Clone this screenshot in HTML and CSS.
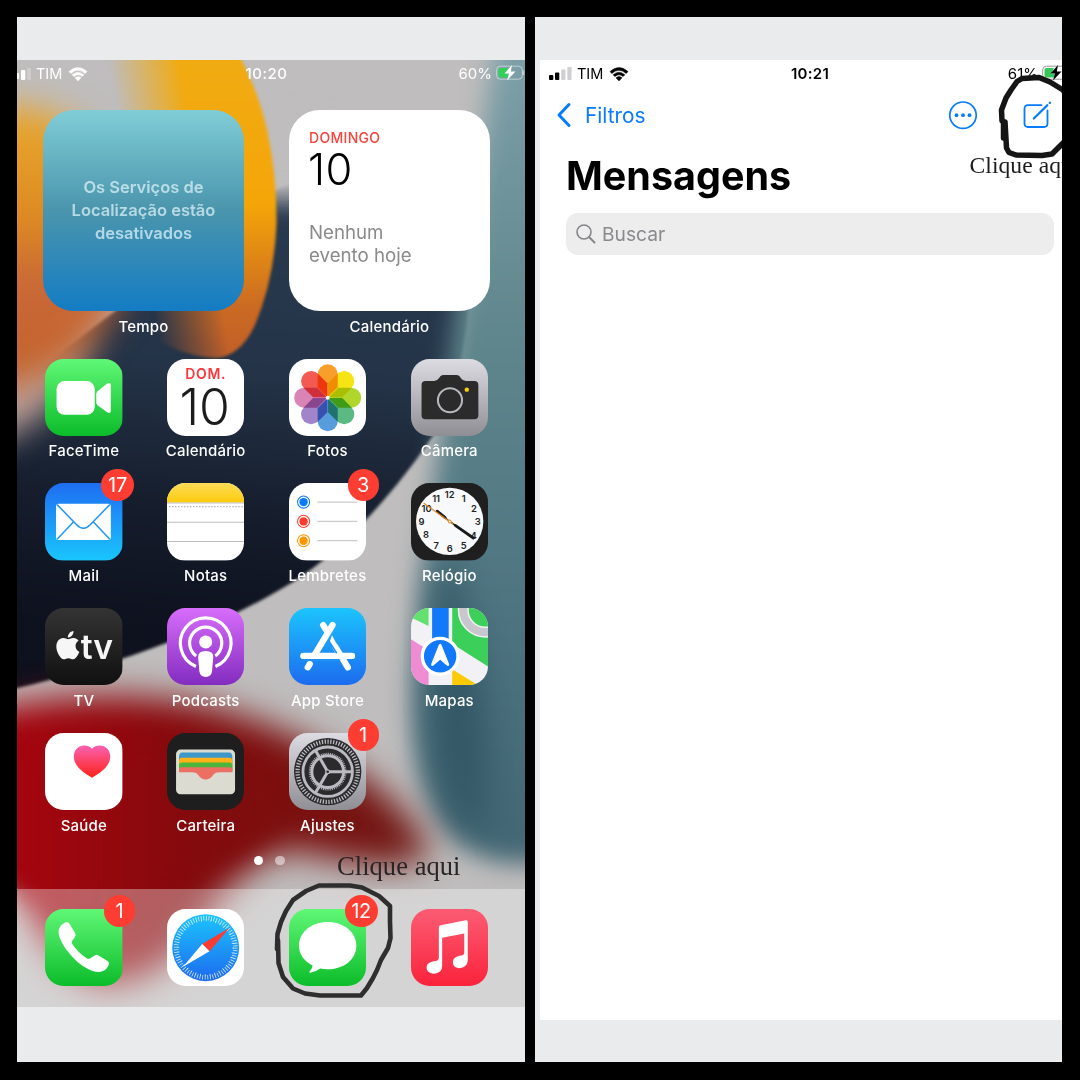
FILE: index.html
```html
<!DOCTYPE html>
<html lang="pt-BR">
<head>
<meta charset="utf-8">
<title>Mensagens</title>
<link rel="stylesheet" href="styles.css">
</head>
<body>
<svg class="defs" width="0" height="0" aria-hidden="true">
  <defs>
    <linearGradient id="green" x2="0" y2="1"><stop stop-color="#60f777"/><stop offset="1" stop-color="#0bbc29"/></linearGradient>
    <linearGradient id="blue" x2="0" y2="1"><stop stop-color="#1cc4fd"/><stop offset="1" stop-color="#1c6bee"/></linearGradient>
    <linearGradient id="mailblue" x2="0" y2="1"><stop stop-color="#1e6df2"/><stop offset="1" stop-color="#1ac6fd"/></linearGradient>
    <linearGradient id="silver" x2="0" y2="1"><stop stop-color="#dddce2"/><stop offset="1" stop-color="#8f8e94"/></linearGradient>
    <linearGradient id="purple" x2="0" y2="1"><stop stop-color="#d86dfb"/><stop offset="1" stop-color="#822cbf"/></linearGradient>
    <linearGradient id="coal" x2="0" y2="1"><stop stop-color="#343434"/><stop offset="1" stop-color="#101010"/></linearGradient>
    <linearGradient id="pink" x2="0" y2="1"><stop stop-color="#fb5c74"/><stop offset="1" stop-color="#fa233b"/></linearGradient>
    <linearGradient id="heart" x2="0" y2="1"><stop stop-color="#fb61b2"/><stop offset="1" stop-color="#fd2216"/></linearGradient>
    <linearGradient id="yellow" x2="0" y2="1"><stop stop-color="#fedc58"/><stop offset="1" stop-color="#fbcb0b"/></linearGradient>
    <symbol id="wifi" viewBox="0 0 20 15">
      <path d="M1 5.6Q10-2.4 19 5.6L17.2 7.5Q10 1.2 2.8 7.5ZM4.1 8.8Q10 3.6 15.9 8.8L14.1 10.6Q10 7.1 5.9 10.6ZM10 14.9L7 11.8Q10 9.4 13 11.8Z" fill="currentColor" stroke="currentColor" stroke-width=".5"/>
    </symbol>
    <path id="petal" d="M0-.5L-10-10.500V-23.300a10 10 0 0 1 20 0V-10.500Z"/>
  </defs>
</svg>
<main class="board">
  <section class="panel panel-home">
    <div class="home">
      <svg class="wallpaper" viewBox="17 60 508 947" preserveAspectRatio="none" aria-hidden="true" color-interpolation-filters="sRGB">
        <defs>
          <filter id="b2" x="-20%" y="-20%" width="140%" height="140%"><feGaussianBlur stdDeviation="1.500"/></filter>
          <filter id="b12" x="-50%" y="-30%" width="200%" height="160%"><feGaussianBlur stdDeviation="12"/></filter>
          <filter id="b18" x="-50%" y="-50%" width="200%" height="200%"><feGaussianBlur stdDeviation="17"/></filter>
          <linearGradient id="navy" gradientUnits="userSpaceOnUse" x1="300" y1="200" x2="260" y2="640"><stop stop-color="#283a50"/><stop offset=".4" stop-color="#243347"/><stop offset=".75" stop-color="#141b2a"/><stop offset="1" stop-color="#0e111e"/></linearGradient>
          <linearGradient id="teal" gradientUnits="userSpaceOnUse" x1="0" y1="60" x2="0" y2="870"><stop stop-color="#7d9fa8"/><stop offset=".35" stop-color="#5f868c"/><stop offset=".7" stop-color="#4d7380"/><stop offset="1" stop-color="#426673"/></linearGradient>
          <linearGradient id="amber" gradientUnits="userSpaceOnUse" x1="0" y1="60" x2="0" y2="350"><stop stop-color="#f0ab12"/><stop offset=".5" stop-color="#f4a508"/><stop offset=".85" stop-color="#cb6a22"/><stop offset="1" stop-color="#c36028"/></linearGradient>
          <linearGradient id="rust" gradientUnits="userSpaceOnUse" x1="0" y1="120" x2="0" y2="370"><stop stop-color="#e8a52c"/><stop offset=".4" stop-color="#dd8a22"/><stop offset=".65" stop-color="#c96838"/><stop offset="1" stop-color="#c4642c"/></linearGradient>
          <linearGradient id="crimson" gradientUnits="userSpaceOnUse" x1="17" y1="0" x2="430" y2="0"><stop stop-color="#a5050e"/><stop offset=".4" stop-color="#850a0d"/><stop offset="1" stop-color="#6e1712"/></linearGradient>
          <linearGradient id="fade" gradientUnits="userSpaceOnUse" x1="108" y1="60" x2="176" y2="48"><stop offset="0" stop-color="#fff" stop-opacity="0"/><stop offset=".5" stop-color="#fff" stop-opacity=".5"/><stop offset="1" stop-color="#fff"/></linearGradient>
          <mask id="ellipsefade" maskUnits="userSpaceOnUse" x="90" y="0" width="210" height="400"><rect x="90" y="0" width="210" height="400" fill="url(#fade)"/></mask>
        </defs>
        <rect x="17" y="60" width="508" height="947" fill="#bfbdbd"/>
        <path d="M275 190Q370 150 470 230Q475 350 440 425C400 487 350 542 305 574C240 618 130 664 0 692V400L90 330Z" fill="url(#navy)" filter="url(#b2)"/>
        <path d="M230 130Q370 100 480 150V200H230Z" fill="#bfbdbd" filter="url(#b12)"/>
        <path d="M496 30Q475 200 452 340C440 450 420 560 412 680Q405 890 560 860V30Z" fill="url(#teal)" filter="url(#b12)"/>
        <path d="M440 560Q410 800 480 840Q500 700 450 560Z" fill="#2f5360" opacity=".85" filter="url(#b18)"/>
        <path d="M-40 350L90 330Q80 400 10 435L-40 455Z" fill="#bfa39b" filter="url(#b18)"/>
        <path d="M-20 110Q60 90 120 170V300Q85 365 30 380L-20 400Z" fill="url(#rust)" filter="url(#b18)"/>
        <path d="M90 20H218Q255 75 267 130Q277 175 276.500 225Q274 280 255 325Q240 357 215 358Q170 356 120 315L90 250Z" fill="url(#amber)" filter="url(#b2)" mask="url(#ellipsefade)"/>
        <path d="M-30 715C60 690 160 688 240 715C320 740 400 790 430 850Q420 880 290 850Q240 865 205 920Q170 978 110 985Q60 985 17 890L-40 850Z" fill="url(#crimson)" filter="url(#b18)"/>
        <path d="M-30 755Q160 700 300 790Q270 850 200 865Q120 945 70 920L-30 860Z" fill="url(#crimson)" filter="url(#b12)"/>
      </svg>
      <header class="status status-light">
        <div class="carrier">
          <svg width="21" height="14" viewBox="0 0 21 14"><rect x="-2" y="7" width="4" height="6" rx="1" fill="#fff"/><rect x="4" y="4" width="4.3" height="10" rx="1" fill="#fff"/><rect x="10" y="2" width="4" height="12" rx="1" fill="#fff" opacity=".25"/></svg>
          <span>TIM</span>
          <svg class="wifi" width="20" height="15"><use href="#wifi"/></svg>
        </div>
        <time class="clock">10:20</time>
        <div class="battery"><span>60%</span>
          <svg width="29" height="16" viewBox="0 0 29 16"><rect x=".7" y="1.2" width="25.6" height="13" rx="3.6" fill="none" stroke="#fff" stroke-opacity=".5"/><path d="M4.5 3H12L9 9H13L12 12.500H4.500Q2.500 12.500 2.500 10.500V5Q2.500 3 4.500 3Z" fill="#31d158"/><path d="M16 0L8.500 8.500H13L11 15.500L19.500 6.500H14.800Z" fill="#fff"/><path d="M27.500 5.500V10" stroke="#fff" stroke-opacity=".5" stroke-width="1.500"/></svg>
        </div>
      </header>
      <div class="widgets">
        <figure class="widget">
          <div class="tile tile-weather">Os Serviços de<br>Localização estão<br>desativados</div>
          <figcaption>Tempo</figcaption>
        </figure>
        <figure class="widget">
          <div class="tile tile-calendar"><b>DOMINGO</b><strong>10</strong><p>Nenhum<br>evento hoje</p></div>
          <figcaption>Calendário</figcaption>
        </figure>
      </div>
      <div class="apps">
        <div class="app"><div class="icon"><svg viewBox="0 0 77 77"><rect width="77" height="77" fill="url(#green)"/><rect x="11.500" y="22" width="38" height="33.500" rx="8" fill="#fff"/><path d="M51 35Q51 33.500 52.300 32L61.500 24.700Q65.500 22.500 65.500 26V51.500Q65.500 55 61.500 52.800L52.300 46Q51 44.500 51 43Z" fill="#fff"/></svg></div><span>FaceTime</span></div>
        <div class="app"><div class="icon icon-cal"><b>DOM.</b><strong>10</strong></div><span>Calendário</span></div>
        <div class="app"><div class="icon"><svg viewBox="0 0 77 77"><rect width="77" height="77" fill="#fff"/><g class="petals" transform="translate(38.500 38.500)"><use href="#petal" fill="#f89f2a"/><use href="#petal" fill="#f6e414" transform="rotate(45)"/><use href="#petal" fill="#b0d62c" transform="rotate(90)"/><use href="#petal" fill="#5cb984" transform="rotate(135)"/><use href="#petal" fill="#579ddb" transform="rotate(180)"/><use href="#petal" fill="#a284cb" transform="rotate(225)"/><use href="#petal" fill="#d984b4" transform="rotate(270)"/><use href="#petal" fill="#f35a52" transform="rotate(315)"/></g><circle cx="38.500" cy="38.500" r="2" fill="#fff"/></svg></div><span>Fotos</span></div>
        <div class="app"><div class="icon"><svg viewBox="0 0 77 77"><rect width="77" height="77" fill="url(#silver)"/><path d="M14.500 22H23Q26 22 28 19L29 17.500Q30 16 32 16H45.500Q47.500 16 48.500 17.500L49.500 19Q51.500 22 54.500 22H63Q67 22 67 26V56Q67 60 63 60H14.500Q10.500 60 10.500 56V26Q10.500 22 14.500 22Z" fill="#2b2b2b"/><circle cx="38.800" cy="41" r="12" fill="none" stroke="#b9b8be" stroke-width="2"/><circle cx="55.500" cy="30.500" r="2.200" fill="#fccf0b"/></svg></div><span>Câmera</span></div>
        <div class="app"><div class="icon"><svg viewBox="0 0 77 77"><rect width="77" height="77" fill="url(#mailblue)"/><rect x="11" y="20.700" width="54.500" height="36" rx="2.500" fill="#fff"/><g fill="none" stroke="#1f96f8" stroke-width="1.500"><path d="M12 21.500L31.500 41.500Q38.300 48.500 45 41.500L64.500 21.500M12 56L28.500 38.500M64.500 56L48 38.500"/></g></svg></div><i class="badge wide">17</i><span>Mail</span></div>
        <div class="app"><div class="icon"><svg viewBox="0 0 77 77"><rect width="77" height="77" fill="#fff"/><rect width="77" height="19.500" fill="url(#yellow)"/><path d="M0 20H77M0 39H77M0 58.200H77" stroke="#bdbdbf"/><path d="M2 23.500H77" stroke="#a9a9a9" stroke-width="1.300" stroke-dasharray="1.300 1.700"/></svg></div><span>Notas</span></div>
        <div class="app"><div class="icon"><svg viewBox="0 0 77 77"><rect width="77" height="77" fill="#fff"/><g fill="none"><circle cx="14.500" cy="19" r="6" stroke="#0a7aff"/><circle cx="14.500" cy="38.200" r="6" stroke="#fc3b30"/><circle cx="14.500" cy="57.400" r="6" stroke="#fd9500"/><path d="M28 19H68M28 38.200H68M28 57.400H68" stroke="#cbcbcd" stroke-width="1.300"/></g><circle cx="14.500" cy="19" r="4.200" fill="#0a7aff"/><circle cx="14.500" cy="38.200" r="4.200" fill="#fc3b30"/><circle cx="14.500" cy="57.400" r="4.200" fill="#fd9500"/></svg></div><i class="badge">3</i><span>Lembretes</span></div>
        <div class="app"><div class="icon"><svg viewBox="0 0 77 77"><rect width="77" height="77" fill="#1f1f1f"/><circle cx="38.500" cy="38.200" r="33.500" fill="#f7f9fb"/><g class="numerals"><text x="38.500" y="14.800">12</text><text x="52.500" y="18.500">1</text><text x="62.500" y="28.800">2</text><text x="66.300" y="41.700">3</text><text x="62.300" y="55.500">4</text><text x="52.300" y="65.200">5</text><text x="38.500" y="68.800">6</text><text x="25" y="65.200">7</text><text x="14.800" y="55.200">8</text><text x="10.500" y="41.700">9</text><text x="15.500" y="28.800">10</text><text x="25" y="18.500">11</text></g><path d="M25.500 27.500L38.500 38.200L62.500 55" fill="none" stroke="#1b1b1b" stroke-width="1.300"/><path d="M26 28L34 34.500M44 42.200L62 54.700" stroke="#1b1b1b" stroke-width="2.800" stroke-linecap="round"/><path d="M12.500 19.800L42 41" stroke="#ee8a24" stroke-width="1.200"/><circle cx="38.500" cy="38.300" r="1.500" fill="#f7f9fb" stroke="#ee8a24"/></svg></div><span>Relógio</span></div>
        <div class="app"><div class="icon"><svg viewBox="0 0 77 77"><rect width="77" height="77" fill="url(#coal)"/><path transform="translate(8.700 23) scale(1.170)" fill="#f6f6f6" d="M12.152 6.896c-.948 0-2.415-1.078-3.960-1.040-2.040.027-3.910 1.183-4.961 3.014-2.117 3.675-.546 9.103 1.519 12.090 1.013 1.454 2.208 3.090 3.792 3.039 1.520-.065 2.090-.987 3.935-.987 1.831 0 2.350.987 3.960.948 1.637-.026 2.676-1.480 3.676-2.948 1.156-1.688 1.636-3.325 1.662-3.415-.039-.013-3.182-1.221-3.220-4.857-.026-3.040 2.480-4.494 2.597-4.559-1.429-2.090-3.623-2.324-4.390-2.376-2-.156-3.675 1.090-4.610 1.090zM15.530 3.830c.843-1.012 1.400-2.427 1.245-3.830-1.207.052-2.662.805-3.532 1.818-.780.896-1.454 2.338-1.273 3.714 1.338.104 2.715-.688 3.559-1.701"/><text class="tv" x="35.500" y="50.500">tv</text></svg></div><span>TV</span></div>
        <div class="app"><div class="icon"><svg viewBox="0 0 77 77"><rect width="77" height="77" fill="url(#purple)"/><g fill="none" stroke="#fff" stroke-width="3.200"><path d="M28.800 58.200A25.200 25.200 0 1 1 48.200 58.200"/><path d="M29 47.800A16 16 0 1 1 48 47.800"/></g><circle cx="38.500" cy="33.800" r="6.500" fill="#fff"/><path d="M38.500 42.800Q46.200 42.800 46 49L44.800 63Q44 68.700 38.500 68.700T32.200 63L31 49Q30.800 42.800 38.500 42.800Z" fill="#fff"/></svg></div><span>Podcasts</span></div>
        <div class="app"><div class="icon"><svg viewBox="0 0 77 77"><rect width="77" height="77" fill="url(#blue)"/><g fill="none" stroke="#fff" stroke-width="6.300" stroke-linecap="round"><path d="M14.300 47.700H62.700M34 17L38 23.500M43.300 17L25 47.500M20.600 55.800L18.700 59"/><path d="M46 38.500L58.500 59"/></g><path d="M40.500 33.500L42.800 27L50 40.500L45 42Z" fill="#fff"/><path d="M39.500 32.500L47.500 45M14 51.900H51" stroke="#1f93f7" stroke-width="1.500"/></svg></div><span>App Store</span></div>
        <div class="app"><div class="icon"><svg viewBox="0 0 77 77"><rect width="77" height="77" fill="#f2f1f6"/><path d="M0 0H17.500V18L0 9.500Z" fill="#62e16f"/><path d="M41 0H77V58.500L41 35.500Z" fill="#3cd05a"/><path d="M21 0H37.500V40H21Z" fill="#1279fb"/><path d="M0 31L17.500 42V77H0Z" fill="#ef8bd2"/><path d="M41 61L67 77H41Z" fill="#fccb05"/><circle cx="74" cy="2" r="22" fill="none" stroke="#f2f1f6" stroke-width="11"/><circle cx="74" cy="2" r="22" fill="none" stroke="#c8c7cd" stroke-width="8"/><circle cx="29" cy="48" r="17.800" fill="#1279fb" stroke="#fff" stroke-width="3.300"/><path d="M29 35.500Q30 35.500 30.500 37L38 56Q38 58.500 36 57.500L29 51.500L22 57.500Q20 58.500 20 56L27.500 37Q28 35.500 29 35.500Z" fill="#fff"/></svg></div><span>Mapas</span></div>
        <div class="app"><div class="icon"><svg viewBox="0 0 77 77"><rect width="77" height="77" fill="#fff"/><path d="M46.800 44.600C43 42 28.700 35 28.700 23.500C28.700 12 41.500 9.500 46.800 15.700C52 9.500 64.900 12 64.900 23.500C64.900 35 50.500 42 46.800 44.600Z" fill="url(#heart)"/></svg></div><span>Saúde</span></div>
        <div class="app"><div class="icon"><svg viewBox="0 0 77 77"><rect width="77" height="77" fill="#1e1e1e"/><rect x="9" y="16.500" width="58.700" height="44.500" rx="4.500" fill="#dcdbd1"/><path d="M12 24Q12 19.500 15 19.500H62Q65 19.500 65 24V38H12Z" fill="#3d98c9"/><path d="M12 28Q12 24.700 15 24.700H62Q65 24.700 65 28V38H12Z" fill="#fbb117"/><path d="M12 32Q12 29.300 15 29.300H62Q65 29.300 65 32V38H12Z" fill="#4cb53b"/><path d="M12 36Q12 34 15 34H62Q65 34 65 36V39H52Q48 39 46.500 41Q43 46.300 38.500 46.300T30.500 41Q29 39 25 39H12Z" fill="#ec6f64"/></svg></div><span>Carteira</span></div>
        <div class="app"><div class="icon"><svg viewBox="0 0 77 77"><rect width="77" height="77" fill="url(#silver)"/><circle cx="38.500" cy="38.500" r="33.500" fill="#2b2b2d"/><g fill="none" stroke="#bbbac0"><circle cx="38.500" cy="38.500" r="30" stroke-width="4.200" stroke-dasharray="1.300 1.518"/><circle cx="38.500" cy="38.500" r="24.600" stroke-width="2.800"/><circle cx="38.500" cy="38.500" r="17.800" stroke-width="2" stroke-dasharray=".900 .964"/><circle cx="38.500" cy="38.500" r="15.800" stroke-width="3"/><path d="M38.500 38.500H62.500M38.500 38.500L26.500 17.700M38.500 38.500L26.500 59.300" stroke-width="3"/></g><circle cx="38.500" cy="38.500" r="2.500" fill="#bbbac0"/><circle cx="38.500" cy="38.500" r="1.300" fill="#2b2b2d"/></svg></div><i class="badge">1</i><span>Ajustes</span></div>
      </div>
      <div class="pages"><i class="current"></i><i></i></div>
      <footer class="dock">
        <div class="app"><div class="icon"><svg viewBox="0 0 77 77"><rect width="77" height="77" fill="url(#green)"/><path d="M20.500 13.200Q23 12.500 24.300 14.700L30 24Q31.200 26.300 29.700 28.200L27 31.500Q26 33 27 34.500Q33 43.500 41.500 49Q43.500 50 45 49L49.500 46.200Q51.300 45 53.300 46.200L62.200 51.800Q64.200 53.200 63.500 55.300Q61.500 61 56.500 62.300C49 64.500 37 57.500 29.500 50C20 40.500 13.500 30 13.500 22.500Q14 16 20.500 13.200Z" fill="#fff"/></svg></div><i class="badge">1</i></div>
        <div class="app"><div class="icon"><svg viewBox="0 0 77 77"><rect width="77" height="77" fill="#fff"/><circle cx="38.500" cy="38.500" r="33.300" fill="url(#blue)"/><circle cx="38.500" cy="38.500" r="29.500" fill="none" stroke="#fff" stroke-opacity=".8" stroke-width="4.500" stroke-dasharray=".800 1.775"/><circle cx="38.500" cy="38.500" r="27.300" fill="none" stroke="#fff" stroke-opacity=".7" stroke-width="2" stroke-dasharray=".800 3.960"/><path d="M62 19L42.300 42L35 34.800Z" fill="#fc3b31"/><path d="M16 57.500L35 34.800L42.300 42Z" fill="#fff"/></svg></div></div>
        <div class="app"><div class="icon"><svg viewBox="0 0 77 77"><rect width="77" height="77" fill="url(#green)"/><path d="M38.500 13C54.500 13 67 23 67 36.500S54.500 60 38.500 60Q34 60 31 59.200Q27 62.500 21 63.500Q19.500 63.500 20.500 62.300Q23.500 59 23.500 56.200Q10 49 10 36.500C10 23 22.500 13 38.500 13Z" fill="#fff"/></svg></div><i class="badge wide">12</i></div>
        <div class="app"><div class="icon"><svg viewBox="0 0 77 77"><rect width="77" height="77" fill="url(#pink)"/><path d="M27.700 18.500Q27.700 16.700 29.500 16.200L54.500 11.300Q56.500 11 56.500 13V50.500Q56.500 57.500 49.500 58.800C44 59.500 41.500 56 41.700 52.800C42 48.500 45.500 47 50 46.300Q53 45.800 53 43.500V24.500L31 28.700V56.500Q31 63 24.500 64.200C19 65 15.500 61.800 15.500 58.500C15.500 54 19.500 52.500 24 51.800Q27.700 51.200 27.700 48.500Z" fill="#fff"/></svg></div></div>
      </footer>
      <div class="note note-home">Clique aqui</div>
      <svg class="scribble scribble-home" width="122" height="120" viewBox="272 880 122 120"><path d="M277 949L277.500 934L281 922L286 911L293 900L306 891L319 885.500L350 885.500L362 887.500L369 891L379 896L384 900.500L390 906L390 922L390.500 938L388 948L381 960L377 970L373 978L367 988L361 995.500L320 995.500L305 993.500L293 988.500L283 977L278.500 963L278 940"/></svg>
    </div>
  </section>
  <section class="panel panel-messages">
    <div class="messages">
      <header class="status">
        <div class="carrier">
          <svg width="23" height="14" viewBox="0 0 23 14"><rect y="9" width="4.300" height="5" rx="1"/><rect x="6" y="6.500" width="4.300" height="7.500" rx="1"/><rect x="12.200" y="3.500" width="4.300" height="10.500" rx="1" fill="#d0d0d2"/><rect x="18.300" y="1" width="4.300" height="13" rx="1" fill="#d0d0d2"/></svg>
          <span>TIM</span>
          <svg class="wifi" width="20" height="15"><use href="#wifi"/></svg>
        </div>
        <time class="clock">10:21</time>
        <div class="battery"><span>61%</span>
          <svg width="29" height="16" viewBox="0 0 29 16"><rect x=".7" y="1.200" width="25.600" height="13" rx="3.600" fill="none" stroke="#999"/><path d="M4.500 3H12L9 9H13L12 12.500H4.500Q2.500 12.500 2.500 10.500V5Q2.500 3 4.500 3Z" fill="#35c759"/><path d="M16 0L8.500 8.500H13L11 15.500L19.500 6.500H14.800Z"/></svg>
        </div>
      </header>
      <nav class="nav">
        <a class="back"><svg width="16" height="26" viewBox="0 0 16 26"><path d="M13 2.500L3 13L13 23.500" fill="none" stroke="#077bfe" stroke-width="3" stroke-linecap="round" stroke-linejoin="round"/></svg>Filtros</a>
        <div class="actions">
          <svg width="29" height="29" viewBox="0 0 29 29"><circle cx="14" cy="14.200" r="13.200" fill="none" stroke="#077bfe" stroke-width="1.700"/><circle cx="7.500" cy="14.200" r="1.900" fill="#077bfe"/><circle cx="14" cy="14.200" r="1.900" fill="#077bfe"/><circle cx="20.500" cy="14.200" r="1.900" fill="#077bfe"/></svg>
          <svg width="29" height="29" viewBox="0 0 29 29"><path d="M18.500 4.200H5Q1.500 4.200 1.500 7.700V22.500Q1.500 26 5 26H21Q24.500 26 24.500 22.500V9.500" fill="none" stroke="#077bfe" stroke-width="1.800" stroke-linecap="round"/><path d="M10.800 17.500L24.300 4.300M26.800 1.900L27 1.700" stroke="#077bfe" stroke-width="2.300" stroke-linecap="round"/></svg>
        </div>
      </nav>
      <h1>Mensagens</h1>
      <div class="search"><svg width="20" height="20" viewBox="0 0 20 20"><circle cx="8" cy="8" r="7" fill="none" stroke="#858589" stroke-width="1.600"/><path d="M13 13L18.500 18.500" stroke="#858589" stroke-width="2" stroke-linecap="round"/></svg>Buscar</div>
      <div class="note note-messages">Clique aqui</div>
      <svg class="scribble scribble-messages" width="92" height="92" viewBox="990 70 92 92"><path d="M1005 122L1002 121L1001.500 110L1006 98L1011 90L1017 81.500L1022 78.500L1039 77.500L1050 82L1063 90L1078 112L1075 132L1062 144L1052 154L1042 155.500L1016 155L1009 152.500L1006.500 148L1005 122"/><path d="M1003.500 122V138"/></svg>
    </div>
  </section>
</main>
</body>
</html>
```
FILE: styles.css
```css
* { box-sizing: border-box; }
body { margin: 0; background: #000; font-family: Inter, "Liberation Sans", sans-serif; }
.defs { position: absolute; }
.board { width: 1080px; height: 1080px; padding: 17px 18px 18px 17px; display: flex; gap: 10px; overflow: hidden; }
.panel { background: #e9ebec; height: 1045px; overflow: hidden; padding-top: 43px; }
.panel-home { width: 508px; }
.panel-messages { width: 527px; padding-left: 5px; }

.home { position: relative; height: 947px; display: flex; flex-direction: column; overflow: hidden; }
.home > * { position: relative; flex: none; }
.home > .wallpaper { position: absolute; inset: 0; width: 508px; height: 947px; }

.status { display: grid; grid-template-columns: 1fr auto 1fr; align-items: center; height: 27px; font-size: 15px; line-height: 27px; }
.status svg { display: block; }
.carrier, .battery { display: flex; align-items: center; }
.carrier span { margin: 0 6px 0 5px; font-size: 14.500px; }
.carrier svg { margin-top: -1px; }
.battery { justify-content: flex-end; gap: 4px; }
.battery svg { margin-top: -1px; }
.clock { font-weight: 500; letter-spacing: .5px; }
.status-light { color: #fff; }
.status-light .carrier span { margin: 0 6px 0 -2px; }
.status-light .clock { margin-left: -9px; }

.widgets { display: flex; gap: 45px; padding: 22.500px 0 0 26px; height: 212px; }
.widget { margin: 0; width: 201px; text-align: center; }
.tile { width: 201px; height: 201px; border-radius: 31px; }
.widget figcaption, .app span { display: block; color: #fff; font-size: 15px; font-weight: 500; letter-spacing: .2px; line-height: 18px; white-space: nowrap; }
.widget figcaption { margin-top: 7px; }
.tile-weather { background: linear-gradient(#80cdd6, #4a95ad 50%, #147cc4); color: rgba(224, 244, 250, .72); font-size: 16.500px; font-weight: 600; line-height: 23px; padding-top: 66px; }
.tile-calendar { background: #fff; text-align: left; padding: 19px 20px; }
.tile-calendar b { display: block; color: #f8433c; font-size: 14px; line-height: 18px; font-weight: 500; letter-spacing: .3px; }
.tile-calendar strong { display: block; font-size: 43.500px; line-height: 43px; font-weight: 300; letter-spacing: .5px; margin: 1px 0 0 -1px; }
.tile-calendar p { margin: 30px 0 0; color: #8a8a8c; font-size: 18.700px; line-height: 23px; }

.apps { display: grid; grid-template-columns: repeat(4, 121.800px); grid-auto-rows: 124.800px; margin-top: 59.500px; padding-left: 6px; height: 487.500px; }
.app { position: relative; display: flex; flex-direction: column; align-items: center; }
.icon { width: 77.400px; height: 77.400px; border-radius: 18.500px; overflow: hidden; }
.icon svg { display: block; width: 100%; height: 100%; }
.app span { margin-top: 6.500px; }
.icon-cal { text-align: center; padding-top: 6px; background: #fff; }
.icon-cal b { display: block; color: #f8383c; font-size: 14px; line-height: 17px; letter-spacing: .7px; font-weight: 600; }
.icon-cal strong { display: block; color: #1c1c1c; font-size: 50px; line-height: 50px; font-weight: 300; letter-spacing: 0; text-indent: -2px; }
.petals use { mix-blend-mode: multiply; }
.numerals { font-size: 9.300px; font-weight: 600; text-anchor: middle; fill: #222; }
.tv { font-size: 33.500px; font-weight: 600; fill: #f6f6f6; }
.badge { position: absolute; top: -14px; left: 81px; height: 32px; min-width: 31px; border-radius: 16px; background: #fd3c32; color: #fff; font-style: normal; font-size: 20px; line-height: 32px; text-align: center; }
.badge.wide { left: 78px; width: 33px; letter-spacing: -.3px; }

.pages { height: 42.500px; display: flex; gap: 12px; justify-content: center; padding-top: 9.500px; margin-right: 4px; }
.pages i { width: 9.500px; height: 9.500px; border-radius: 50%; background: rgba(255, 255, 255, .5); }
.pages .current { background: #fff; }
.dock { height: 119px; display: grid; grid-template-columns: repeat(4, 121.800px); padding: 20.500px 0 0 6px; background: rgba(255, 255, 255, .35); }

.note { font-family: "Liberation Serif", serif; font-size: 26.500px; line-height: 30px; letter-spacing: .05px; white-space: nowrap; }
.home > .note-home { position: absolute; left: 320px; top: 791px; color: #292526; }
.scribble { fill: none; stroke-linejoin: round; stroke-linecap: round; }
.home > .scribble-home { position: absolute; left: 255px; top: 820px; stroke: #2e2e2e; stroke-width: 4.600px; }

.messages { position: relative; height: 960px; background: #fff; overflow: hidden; color: #000; width: 522px; }
.messages .status { padding-left: 9px; width: 531px; }
.messages .clock { font-weight: 600; font-size: 15px; letter-spacing: .3px; }
.nav { display: flex; justify-content: space-between; align-items: center; height: 56px; padding: 0 10px 0 16px; color: #077bfe; }
.back { display: flex; align-items: center; gap: 13px; font-size: 20.800px; }
.actions { display: flex; gap: 45px; }
h1 { margin: 9px 0 0 26px; font-size: 39.500px; line-height: 48px; font-weight: 700; letter-spacing: 0; }
.search { margin: 13px 0 0 26px; width: 488px; height: 42px; border-radius: 12px; background: #ededee; color: #8a8a8e; display: flex; align-items: center; gap: 6px; padding-left: 10px; font-size: 19.200px; }
.note-messages { position: absolute; left: 429.500px; top: 90px; color: #1c1c1c; font-size: 23.600px; }
.scribble-messages { position: absolute; left: 450px; top: 10px; stroke: #151515; stroke-width: 5.500px; }
```
